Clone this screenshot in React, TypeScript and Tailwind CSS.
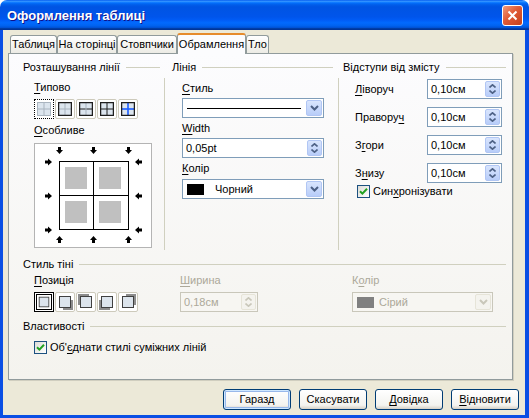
import React from "react";

function U({ children }: { children: React.ReactNode }) {
  return <span className="underline underline-offset-[2px] decoration-1">{children}</span>;
}

function GroupHeader({ label, className = "" }: { label: React.ReactNode; className?: string }) {
  return (
    <div className={`flex items-center h-[13px] ${className}`}>
      <span className="whitespace-nowrap">{label}</span>
      <div className="flex-1 h-px bg-[#d0d0bf] ml-[6px]" />
    </div>
  );
}

function DropBtn({ disabled = false }: { disabled?: boolean }) {
  return (
    <div
      className={`w-[16px] h-[16px] rounded-[2px] border flex items-center justify-center ${
        disabled
          ? "bg-[#f4f3ee] border-[#e6e4d8]"
          : "bg-[linear-gradient(to_bottom,#d9e5fd,#b8cdf9)] border-[#b1c6f4]"
      }`}
    >
      <svg width="9" height="6" viewBox="0 0 9 6">
        <path d="M1 1 L4.5 4.5 L8 1" fill="none" stroke={disabled ? "#c9c7ba" : "#4d6185"} strokeWidth="2" />
      </svg>
    </div>
  );
}

function SpinBtn({ disabled = false }: { disabled?: boolean }) {
  const c = disabled ? "#c9c7ba" : "#4d6185";
  return (
    <div
      className={`w-[15px] h-[16px] rounded-[2px] border flex flex-col items-center justify-center gap-[2px] ${
        disabled
          ? "bg-[#f4f3ee] border-[#e6e4d8]"
          : "bg-[linear-gradient(to_bottom,#d9e5fd,#b8cdf9)] border-[#b1c6f4]"
      }`}
    >
      <svg width="7" height="4" viewBox="0 0 7 4">
        <path d="M0.5 3.5 L3.5 0.8 L6.5 3.5" fill="none" stroke={c} strokeWidth="1.6" />
      </svg>
      <svg width="7" height="4" viewBox="0 0 7 4">
        <path d="M0.5 0.5 L3.5 3.2 L6.5 0.5" fill="none" stroke={c} strokeWidth="1.6" />
      </svg>
    </div>
  );
}

function SpinField({ value, w, disabled = false }: { value: string; w: string; disabled?: boolean }) {
  return (
    <div
      className={`${w} h-[20px] border flex items-center pl-[3px] pr-[1px] ${
        disabled ? "border-[#c9c7ba] bg-[#f7f6f2] text-[#aca899]" : "border-[#7f9db9] bg-white"
      }`}
    >
      <span className="flex-1">{value}</span>
      <SpinBtn disabled={disabled} />
    </div>
  );
}

function CheckBox() {
  return (
    <div className="w-[13px] h-[13px] border border-[#1c5180] bg-[linear-gradient(135deg,#dcdcd7,#ffffff)] flex items-center justify-center">
      <svg width="9" height="9" viewBox="0 0 9 9">
        <path d="M1 4.2 L3.4 6.6 L8 1.8" fill="none" stroke="#21a121" strokeWidth="2" />
      </svg>
    </div>
  );
}

function PresetIcon({ kind }: { kind: number }) {
  const grey = "#a9b4bf";
  const dark = "#1e1e1e";
  const outer = kind === 0 ? grey : dark;
  const h = kind >= 2 ? dark : grey;
  const v = kind >= 3 ? dark : grey;
  return (
    <svg width="14" height="14" viewBox="0 0 14 14">
      <rect x="0" y="0" width="14" height="14" fill="#dce5ee" />
      <line x1="0.5" y1="7" x2="13.5" y2="7" stroke={kind === 4 ? "#1a5cff" : h} strokeWidth={kind === 4 ? 1.6 : 1} />
      <line x1="7" y1="0.5" x2="7" y2="13.5" stroke={kind === 4 ? "#1a5cff" : v} strokeWidth={kind === 4 ? 1.6 : 1} />
      <rect x="0.5" y="0.5" width="13" height="13" fill="none" stroke={outer} strokeWidth={kind === 0 ? 1 : 1.5} />
    </svg>
  );
}

function ShadowIcon({ pos }: { pos: number }) {
  // 0 none, 1 bottom-right, 2 top-left, 3 bottom-left, 4 top-right
  const offs = [null, [3, 3], [-3, -3], [-3, 3], [3, -3]][pos];
  return (
    <svg width="16" height="16" viewBox="0 0 16 16">
      {offs && <rect x={3 + offs[0]} y={3 + offs[1]} width="11" height="11" fill="#8c8c8c" />}
      <rect x="2.5" y="2.5" width="11" height="11" fill="#dce4ec" stroke="#404040" />
    </svg>
  );
}

function Arrow({ x, y, r }: { x: number; y: number; r: number }) {
  return (
    <path
      transform={`translate(${x} ${y}) rotate(${r})`}
      d="M-1.5 -7 H1.5 V-4 H3.5 L0 0 L-3.5 -4 H-1.5 Z"
      fill="#000"
    />
  );
}

function BorderDiagram() {
  const gx = [24, 58, 93];
  return (
    <svg width="116" height="103" viewBox="0 0 116 103">
      <rect x="30" y="23" width="22" height="22" fill="#c0c0c0" />
      <rect x="64" y="23" width="22" height="22" fill="#c0c0c0" />
      <rect x="30" y="57" width="22" height="22" fill="#c0c0c0" />
      <rect x="64" y="57" width="22" height="22" fill="#c0c0c0" />
      <rect x="24.5" y="17.5" width="69" height="68" fill="none" stroke="#000" />
      <line x1="58.5" y1="17.5" x2="58.5" y2="85.5" stroke="#000" />
      <line x1="24.5" y1="51.5" x2="93.5" y2="51.5" stroke="#000" />
      {gx.map((x) => (
        <Arrow key={"t" + x} x={x + 0.5} y={10} r={0} />
      ))}
      {gx.map((x) => (
        <Arrow key={"b" + x} x={x + 0.5} y={92} r={180} />
      ))}
      {[18, 52, 86].map((y) => (
        <Arrow key={"l" + y} x={17} y={y} r={-90} />
      ))}
      {[18, 52, 86].map((y) => (
        <Arrow key={"r" + y} x={100} y={y} r={90} />
      ))}
    </svg>
  );
}

function Tab({ label, w, active = false }: { label: string; w: string; active?: boolean }) {
  return (
    <div
      className={`${w} flex items-center justify-center border border-[#919b9c] border-b-0 rounded-t-[3px] whitespace-nowrap ${
        active
          ? "h-[21px] -mb-px bg-[#fcfcfe] border-t-[#e68b2c] border-t-2 relative z-10"
          : "h-[18px] bg-[linear-gradient(to_bottom,#ffffff,#ecebe5)]"
      }`}
    >
      {label}
    </div>
  );
}

function Button({ children, isDefault = false }: { children: React.ReactNode; isDefault?: boolean }) {
  return (
    <div
      className={`w-[68px] h-[21px] flex items-center justify-center border border-[#003c74] rounded-[3px] bg-[linear-gradient(to_bottom,#ffffff,#f3f3ef_80%,#d6d0c5)] ${
        isDefault ? "shadow-[inset_0_0_0_1px_#cee7ff,inset_0_0_0_2px_#98b8ea]" : ""
      }`}
    >
      {children}
    </div>
  );
}

export default function App() {
  const rows: [React.ReactNode, string][] = [
    [<><U>Л</U>іворуч</>, "0,10см"],
    [<>Правору<U>ч</U></>, "0,10см"],
    [<>З<U>г</U>ори</>, "0,10см"],
    [<>З<U>н</U>изу</>, "0,10см"],
  ];

  return (
    <div className="w-[529px] h-[418px] flex flex-col font-['Liberation_Sans',Arial,sans-serif] text-[11px] leading-[13px] text-black bg-white">
      {/* title bar */}
      <div className="h-[30px] shrink-0 rounded-t-[7px] flex items-center pl-[7px] pr-[6px] bg-[linear-gradient(to_bottom,#0058ee_0%,#3593ff_4%,#288eff_6%,#127dff_8%,#036ffc_10%,#0262ee_14%,#0057e5_20%,#0054e3_24%,#0055eb_56%,#005bf5_66%,#026afe_76%,#0062ef_86%,#0052d6_92%,#0040ab_94%,#003092_100%)]">
        <span className="flex-1 text-white font-bold text-[13px] [text-shadow:1px_1px_#0f1089]">Оформлення таблиці</span>
        <div className="w-[21px] h-[21px] rounded-[3px] border border-white bg-[linear-gradient(135deg,#f29b7c,#e05a36_45%,#c4411c)] flex items-center justify-center">
          <svg width="11" height="11" viewBox="0 0 11 11">
            <path d="M1.5 1.5 L9.5 9.5 M9.5 1.5 L1.5 9.5" stroke="#fff" strokeWidth="2" />
          </svg>
        </div>
      </div>

      {/* body */}
      <div className="flex-1 flex flex-col bg-[#ece9d8] border-l-[3px] border-r-[4px] border-b-[3px] border-[#0a4fe4] pl-[5px] pr-[6px] pt-[3px]">
        {/* tabs */}
        <div className="flex items-end h-[20px] pl-[2px]">
          <Tab label="Таблиця" w="w-[47px]" />
          <Tab label="На сторінці" w="w-[60px]" />
          <Tab label="Стовпчики" w="w-[60px]" />
          <Tab label="Обрамлення" w="w-[69px]" active />
          <Tab label="Тло" w="w-[23px]" />
        </div>

        {/* panel */}
        <div className="w-[505px] h-[327px] border border-[#919b9c] bg-[linear-gradient(to_bottom,#fcfcfe,#f4f3ee)] pt-[7px] flex flex-col shadow-[1px_1px_0_#d0cebf]">
          <div className="flex h-[189px]">
            {/* line arrangement */}
            <div className="w-[155px] flex flex-col">
              <GroupHeader label="Розташування лінії" className="pl-[14px] pr-[4px]" />
              <div className="pl-[25px] flex flex-col">
                <div className="mt-[7px]"><U>Т</U>ипово</div>
                <div className="mt-[5px] flex gap-[1px]">
                  {[0, 1, 2, 3, 4].map((k) => (
                    <div
                      key={k}
                      className={`w-[20px] h-[20px] flex items-center justify-center bg-white ${
                        k === 0 ? "border border-dotted border-black" : "border border-[#cdcabb] rounded-[2px]"
                      }`}
                    >
                      <PresetIcon kind={k} />
                    </div>
                  ))}
                </div>
                <div className="mt-[5px]"><U>О</U>собливе</div>
                <div className="mt-[6px] w-[118px] h-[105px] border border-[#b4b4b4] bg-white">
                  <BorderDiagram />
                </div>
              </div>
            </div>

            {/* line */}
            <div className="w-[174px] flex flex-col">
              <GroupHeader label="Лінія" className="pl-[8px] pr-[5px]" />
              <div className="flex-1 mt-[4px] border-l border-[#d0d0bf] pl-[17px] pt-[4px] flex flex-col">
                <div><U>С</U>тиль</div>
                <div className="mt-[3px] w-[142px] h-[20px] border border-[#7f9db9] bg-white flex items-center pl-[4px] pr-[1px]">
                  <div className="flex-1 h-px bg-black mr-[5px]" />
                  <DropBtn />
                </div>
                <div className="mt-[4px]"><U>W</U>idth</div>
                <div className="mt-[3px]">
                  <SpinField value="0,05pt" w="w-[142px]" />
                </div>
                <div className="mt-[4px]"><U>К</U>олір</div>
                <div className="mt-[4px] w-[142px] h-[20px] border border-[#7f9db9] bg-white flex items-center pl-[4px] pr-[1px]">
                  <div className="w-[17px] h-[11px] bg-black" />
                  <span className="flex-1 ml-[11px]">Чорний</span>
                  <DropBtn />
                </div>
              </div>
            </div>

            {/* spacing */}
            <div className="flex-1 flex flex-col">
              <GroupHeader label="Відступи від змісту" className="pl-[5px] pr-[6px]" />
              <div className="flex-1 mt-[4px] border-l border-[#d0d0bf] pl-[16px] pr-[10px] pt-[1px] flex flex-col">
                <div className="flex flex-col gap-[8px]">
                  {rows.map(([label, v], i) => (
                    <div key={i} className="flex items-center">
                      <span className="flex-1">{label}</span>
                      <SpinField value={v} w="w-[75px]" />
                    </div>
                  ))}
                </div>
                <div className="mt-[2px] pl-[2px] flex items-center gap-[3px]">
                  <CheckBox />
                  <span>Син<U>х</U>ронізувати</span>
                </div>
              </div>
            </div>
          </div>

          {/* shadow style */}
          <GroupHeader label="Стиль тіні" className="mt-[8px] pl-[14px] pr-[6px]" />
          <div className="mt-[3px] pl-[25px] flex">
            <div className="w-[146px] flex flex-col">
              <div><U>П</U>озиція</div>
              <div className="mt-[5px] flex gap-[1px]">
                {[0, 1, 2, 3, 4].map((k) => (
                  <div
                    key={k}
                    className={`w-[20px] h-[20px] flex items-center justify-center bg-white ${
                      k === 0 ? "border-[3px] border-double border-black" : "border border-[#cdcabb] rounded-[2px]"
                    }`}
                  >
                    <ShadowIcon pos={k} />
                  </div>
                ))}
              </div>
            </div>
            <div className="w-[172px] flex flex-col text-[#aca899]">
              <div><U>Ш</U>ирина</div>
              <div className="mt-[5px]">
                <SpinField value="0,18см" w="w-[78px]" disabled />
              </div>
            </div>
            <div className="flex flex-col text-[#aca899]">
              <div>К<U>о</U>лір</div>
              <div className="mt-[5px] w-[141px] h-[20px] border border-[#c9c7ba] bg-[#f7f6f2] flex items-center pl-[4px] pr-[1px]">
                <div className="w-[17px] h-[11px] bg-[#808080]" />
                <span className="flex-1 ml-[5px]">Сірий</span>
                <DropBtn disabled />
              </div>
            </div>
          </div>

          {/* properties */}
          <GroupHeader label="Властивості" className="mt-[8px] pl-[14px] pr-[6px]" />
          <div className="mt-[8px] pl-[25px] flex items-center gap-[3px]">
            <CheckBox />
            <span>Об'<U>є</U>днати стилі суміжних ліній</span>
          </div>
        </div>

        {/* buttons */}
        <div className="mt-[9px] flex justify-end gap-[8px]">
          <Button isDefault>Гаразд</Button>
          <Button>Скасувати</Button>
          <Button><U>Д</U>овідка</Button>
          <Button><U>В</U>ідновити</Button>
        </div>
      </div>
    </div>
  );
}
